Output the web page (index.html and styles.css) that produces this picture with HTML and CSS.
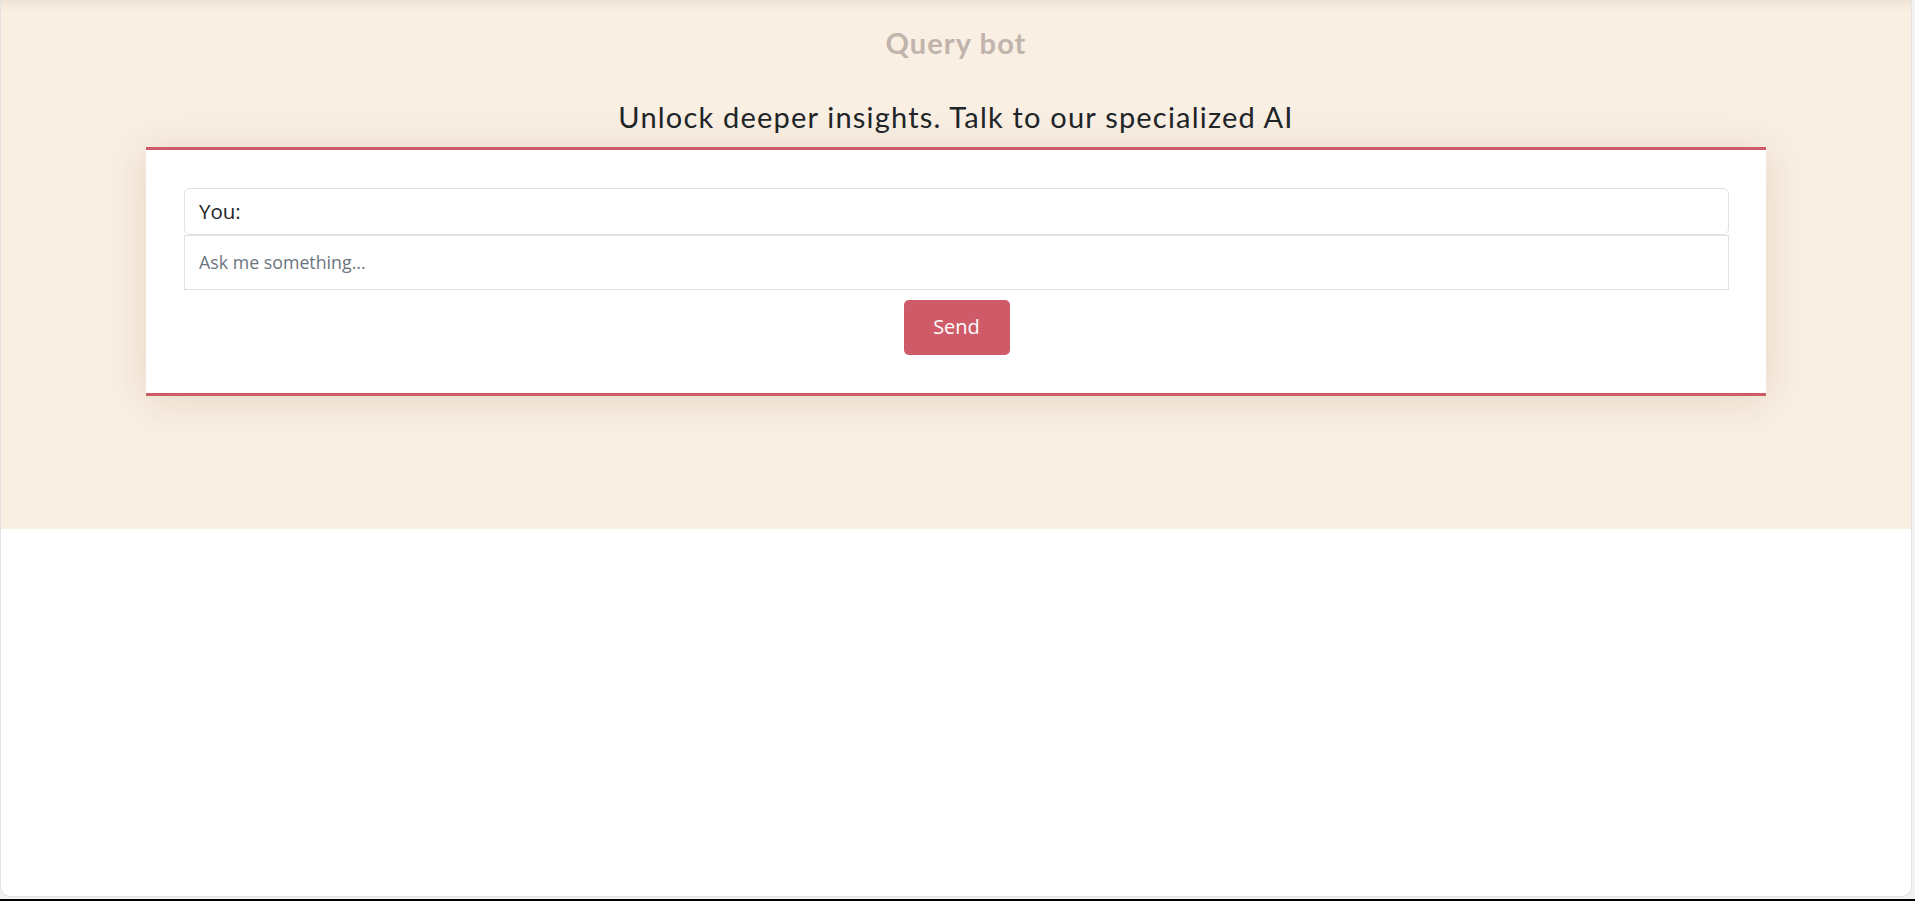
FILE: index.html
```html
<!DOCTYPE html>
<html lang="en">
<head>
<meta charset="utf-8">
<title>Query bot</title>
<link rel="stylesheet" href="styles.css">
</head>
<body>
<div class="window">
  <section class="hero">
    <h1 class="brand">Query bot</h1>
    <h2 class="tagline">Unlock deeper insights. Talk to our specialized AI</h2>
    <div class="card">
      <div class="you">You:</div>
      <input class="ask" type="text" placeholder="Ask me something...">
      <div class="actions">
        <button class="send" type="button">Send</button>
      </div>
    </div>
  </section>
</div>
<div class="gap"></div>
<div class="taskbar"></div>
</body>
</html>
```
FILE: styles.css
```css
html, body {
  margin: 0;
  padding: 0;
}
body {
  width: 1915px;
  height: 901px;
  overflow: hidden;
  background: #f3f3f3;
  font-family: "Open Sans", "Liberation Sans", sans-serif;
}
.window {
  box-sizing: border-box;
  width: 1912px;
  height: 897px;
  background: #ffffff;
  border: 1px solid #e2e2e2;
  border-top: none;
  border-radius: 0 0 10px 10px;
  overflow: hidden;
}
.gap {
  height: 2px;
}
.taskbar {
  height: 2px;
  background: #000;
}
.hero {
  box-sizing: border-box;
  height: 529px;
  background: #f9efe3;
  box-shadow: inset 0 10px 12px -8px rgba(110, 80, 40, 0.12);
  padding-top: 28px;
  display: flex;
  flex-direction: column;
  align-items: center;
}
.brand {
  margin: 0;
  font-family: "Lato", "Liberation Sans", sans-serif;
  font-weight: 700;
  font-size: 29px;
  line-height: 29px;
  letter-spacing: 1.1px;
  color: #c0b4ac;
}
.tagline {
  margin: 45px 0 0;
  font-family: "Lato", "Liberation Sans", sans-serif;
  font-weight: 400;
  font-size: 29px;
  line-height: 29px;
  letter-spacing: 1.2px;
  color: #212529;
}
.card {
  box-sizing: border-box;
  width: 1620px;
  margin-top: 16px;
  background: #fff;
  border-top: 3px solid #cf5b68;
  border-bottom: 3px solid #cf5b68;
  padding: 38px 37px 38px 38px;
  box-shadow: 0 4px 40px rgba(120, 85, 40, 0.16);
  display: flex;
  flex-direction: column;
}
.you {
  box-sizing: border-box;
  height: 47px;
  border: 1px solid #dee2e6;
  border-radius: 6px;
  padding: 0 14px 2px;
  display: flex;
  align-items: center;
  font-size: 20.5px;
  color: #212529;
}
.ask {
  box-sizing: border-box;
  height: 55px;
  margin: 0;
  border: 1px solid #dee2e6;
  border-radius: 0;
  padding: 0 14px 2px;
  font-family: "Open Sans", "Liberation Sans", sans-serif;
  font-size: 17.8px;
  color: #212529;
  background: #fff;
  outline: none;
}
.ask::placeholder {
  color: #6c757d;
}
.actions {
  display: flex;
  justify-content: center;
  margin-top: 10px;
}
.send {
  box-sizing: border-box;
  width: 106px;
  height: 55px;
  border: none;
  border-radius: 5px;
  background: #cf5b68;
  color: #fff;
  font-family: "Open Sans", "Liberation Sans", sans-serif;
  font-size: 20px;
  padding: 0 0 2px;
  cursor: pointer;
}
```
